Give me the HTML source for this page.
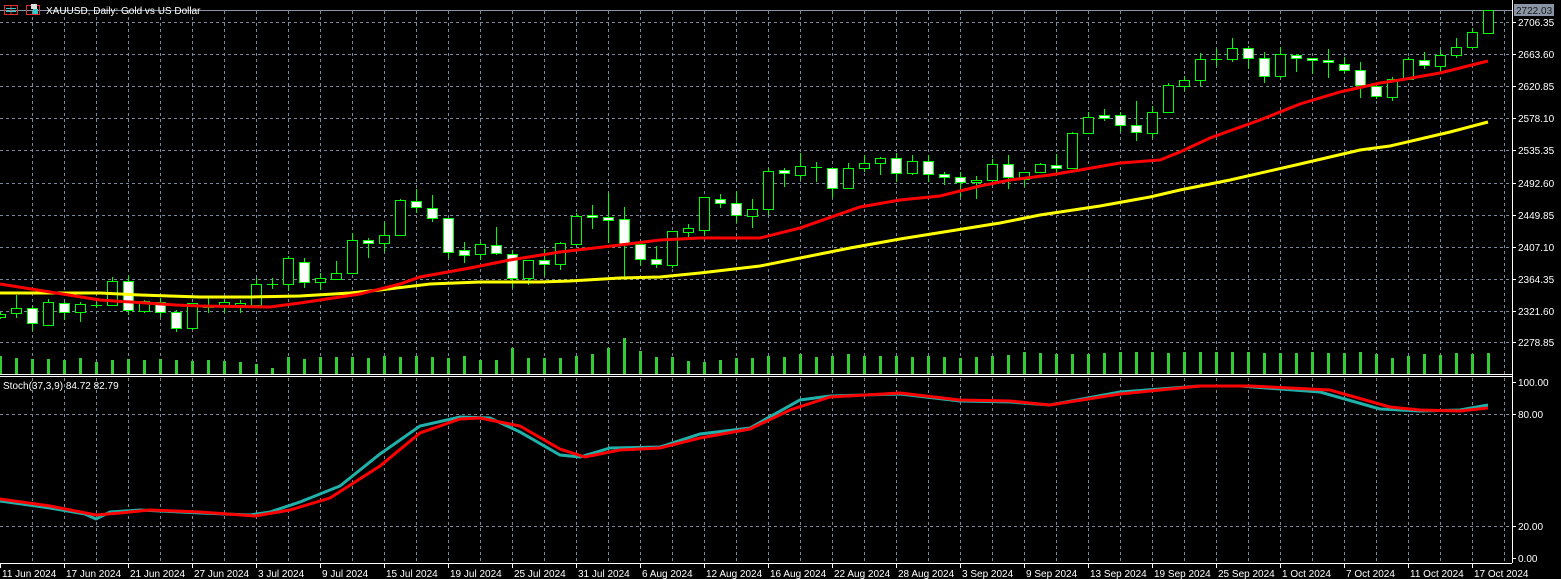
<!DOCTYPE html>
<html><head><meta charset="utf-8"><style>
html,body{margin:0;padding:0;background:#000;width:1561px;height:579px;overflow:hidden}
svg{display:block}
text{font-family:"Liberation Sans",sans-serif;font-size:10px;fill:#fff}
</style></head><body>
<svg id="s" width="1561" height="579" xmlns="http://www.w3.org/2000/svg">
<rect width="1561" height="579" fill="#000"/>
<g id="grid" stroke="#7a8a9c" stroke-width="1" stroke-dasharray="3,3"></g>
<line x1="0" y1="10.5" x2="1512" y2="10.5" stroke="#8a96a6"/>
<g id="vol" fill="#32cd32"></g>
<g id="cand"></g>
<polyline id="yel" fill="none" stroke="#ffff00" stroke-width="3"/>
<polyline id="red" fill="none" stroke="#ff0000" stroke-width="3"/>
<polyline id="st1" fill="none" stroke="#20b2aa" stroke-width="3"/>
<polyline id="st2" fill="none" stroke="#ff0000" stroke-width="3"/>
<line x1="0" y1="374.5" x2="1512" y2="374.5" stroke="#fff"/>
<line x1="0" y1="376.5" x2="1512" y2="376.5" stroke="#fff"/>
<line x1="0" y1="563.5" x2="1512" y2="563.5" stroke="#fff"/>
<line x1="1512.5" y1="0" x2="1512.5" y2="563" stroke="#fff"/>
<g id="axis"></g>
<rect x="1514" y="4" width="40" height="12" fill="#8a96a6"/>
<text x="1516" y="14" fill="#000" style="fill:#1a1a1a">2722.03</text>
<rect x="4.5" y="5.5" width="13" height="9" fill="none" stroke="#e03030"/>
<line x1="11" y1="5" x2="11" y2="15" stroke="#e03030"/>
<line x1="6" y1="8.5" x2="16" y2="8.5" stroke="#3cc"/><line x1="6" y1="11.5" x2="16" y2="11.5" stroke="#3cc"/>
<rect x="26.5" y="5.5" width="13" height="9" fill="none" stroke="#e03030"/>
<rect x="31" y="4" width="6" height="5" fill="#ddd"/><rect x="33" y="9" width="5" height="5" fill="#3cc"/>
<text x="46" y="14">XAUUSD, Daily:  Gold vs US Dollar</text>
<text x="3" y="389">Stoch(37,3,9) 84.72 82.79</text>
</svg>
<script>
var NS="http://www.w3.org/2000/svg";
function el(p,t,a,txt){var e=document.createElementNS(NS,t);for(var k in a)e.setAttribute(k,a[k]);if(txt)e.textContent=txt;document.getElementById(p).appendChild(e);return e;}
// grid
for(var x=32;x<1512;x+=32){el("grid","line",{x1:x+.5,y1:11,x2:x+.5,y2:374});el("grid","line",{x1:x+.5,y1:378,x2:x+.5,y2:563});}
var hy=[22,54,86,118,150,183,215,247,279,311,342,414,526];
hy.forEach(function(y){el("grid","line",{x1:0,y1:y+.5,x2:1512,y2:y+.5});});
// axis labels
var pl=[["2706.35",22],["2663.60",54],["2620.85",86],["2578.10",118],["2535.35",150],["2492.60",183],["2449.85",215],["2407.10",247],["2364.35",279],["2321.60",311],["2278.85",342],["100.00",382],["80.00",414],["20.00",526],["0.00",558]];
pl.forEach(function(p){el("axis","line",{x1:1512,y1:p[1]+.5,x2:1516,y2:p[1]+.5,stroke:"#fff"});el("axis","text",{x:1518,y:p[1]+4},p[0]);});
var d=["11 Jun 2024","17 Jun 2024","21 Jun 2024","27 Jun 2024","3 Jul 2024","9 Jul 2024","15 Jul 2024","19 Jul 2024","25 Jul 2024","31 Jul 2024","6 Aug 2024","12 Aug 2024","16 Aug 2024","22 Aug 2024","28 Aug 2024","3 Sep 2024","9 Sep 2024","13 Sep 2024","19 Sep 2024","25 Sep 2024","1 Oct 2024","7 Oct 2024","11 Oct 2024","17 Oct 2024"];
d.forEach(function(t,i){var x=i*64;el("axis","line",{x1:x+.5,y1:563,x2:x+.5,y2:568,stroke:"#fff"});el("axis","text",{x:x+2,y:577},t);});
// candles: [bodyTop,bodyBot,high,low,white]
var C=[[314,317,312,319,0],[308,313,295,318,0],[308,323,306,331,1],[302,325,299,326,0],[303,312,302,320,1],[304,312,302,322,0],[305,305,302,308,0],[281,305,277,305,0],[281,310,275,315,1],[301,311,300,313,0],[302,312,298,317,1],[312,328,310,332,1],[303,328,303,330,0],[305,307,297,313,0],[302,305,300,313,0],[303,305,300,313,0],[284,305,278,305,0],[284,284,278,289,0],[258,284,256,291,0],[262,282,258,288,1],[278,282,273,290,0],[273,279,261,279,0],[240,273,233,273,0],[240,243,238,258,1],[235,243,222,252,0],[200,235,199,236,0],
[201,207,189,213,1],[208,218,195,222,1],[218,252,218,258,1],[250,255,242,263,1],[244,254,242,260,0],[245,253,227,255,1],[254,278,250,288,1],[260,278,260,285,0],[260,264,249,276,1],[243,264,242,270,0],[216,244,213,244,0],[215,217,205,229,1],[217,220,193,243,1],[219,244,207,277,1],[244,259,244,266,1],[259,264,246,268,1],[231,265,231,268,0],[228,232,224,237,0],[197,230,197,235,0],[199,203,194,208,1],[203,215,191,223,1],[209,216,199,228,0],[171,209,168,215,0],[170,173,168,187,1],
[166,175,153,180,0],[167,167,162,182,0],[168,188,168,198,1],[168,188,163,188,0],[163,168,155,172,0],[158,163,157,175,0],[158,173,153,182,1],[161,173,155,175,0],[161,174,155,182,1],[174,177,172,185,1],[177,182,172,197,1],[180,182,176,199,0],[164,180,159,180,0],[164,177,155,189,1],[172,179,172,187,0],[164,172,163,172,0],[165,168,154,173,1],[133,168,132,168,0],[117,133,112,134,0],[115,118,109,121,1],[115,125,112,132,1],[125,132,101,141,1],[112,133,106,138,0],[85,112,83,113,0],
[80,86,76,91,0],[59,80,53,86,0],[59,59,49,66,0],[48,59,38,62,0],[48,58,46,69,1],[58,76,52,83,1],[54,76,47,78,0],[55,58,54,72,1],[58,60,58,74,1],[60,62,49,78,1],[64,70,57,73,1],[70,85,62,98,1],[86,96,86,99,1],[79,97,77,101,0],[59,79,57,79,0],[60,65,52,69,1],[55,66,50,72,0],[47,55,38,58,0],[32,47,28,47,0],[10,33,10,33,0]];
var vh=[18,16,15,15,14,16,12,14,15,14,15,14,13,14,13,12,10,6,17,15,17,17,17,16,18,17,18,17,16,18,14,14,26,16,16,16,18,20,26,36,23,17,17,13,12,14,16,16,18,17,20,17,18,20,18,18,18,17,18,17,16,17,18,19,22,21,20,20,20,21,22,22,22,21,22,22,22,22,22,21,21,21,22,21,21,22,20,16,18,20,19,21,20,21];
C.forEach(function(c,i){var x=i*16;
 el("vol","rect",{x:x-1,y:374-vh[i],width:3,height:vh[i]});
 el("cand","line",{x1:x+.5,y1:c[2],x2:x+.5,y2:c[0],stroke:"#00ff00"});
 el("cand","line",{x1:x+.5,y1:c[1],x2:x+.5,y2:c[3],stroke:"#00ff00"});
 if(c[1]-c[0]<1){el("cand","line",{x1:x-5,y1:c[0]+.5,x2:x+6,y2:c[0]+.5,stroke:"#00ff00"});}
 else el("cand","rect",{x:x-4.5,y:c[0]+.5,width:10,height:c[1]-c[0],fill:c[4]?"#fff":"#000",stroke:"#00ff00"});
});
function pts(id,a){document.getElementById(id).setAttribute("points",a.map(function(p){return p.join(",")}).join(" "));}
pts("red",[[0,284],[50,292],[100,300],[176,305],[200,306],[270,307],[300,303],[360,294],[400,284],[420,277],[470,268],[510,260],[560,252],[620,245],[660,240],[700,238],[760,238],[800,228],[860,207],[900,200],[940,196],[980,186],[1010,180],[1050,175],[1080,170],[1120,163],[1160,160],[1180,152],[1210,138],[1260,120],[1300,104],[1340,92],[1380,83],[1400,80],[1440,73],[1488,61]]);
pts("yel",[[0,293],[100,293],[140,295],[200,297],[250,297],[300,296],[350,293],[380,290],[430,284],[480,282],[540,282],[570,281],[620,278],[660,277],[700,273],[760,266],[800,258],[850,248],[900,239],[950,231],[1000,223],[1040,215],[1100,206],[1150,197],[1180,190],[1230,180],[1300,164],[1360,150],[1390,146],[1420,139],[1450,132],[1488,122]]);
pts("st1",[[0,501],[50,508],[85,514],[96,519],[110,512],[140,510],[160,511],[200,513],[250,515],[270,512],[300,502],[340,486],[380,454],[420,426],[460,417],[490,418],[520,432],[560,455],[580,457],[610,448],[660,447],[700,434],[750,428],[800,400],[830,396],[900,394],[960,401],[1010,402],[1050,405],[1120,392],[1200,386],[1240,386],[1320,392],[1380,409],[1420,411],[1460,410],[1488,405]]);
pts("st2",[[0,499],[50,506],[96,515],[120,513],[150,510],[200,512],[255,516],[290,510],[330,498],[380,466],[420,433],[460,419],[480,418],[520,426],[560,449],[585,457],[620,450],[660,448],[700,438],[750,429],[790,410],[830,397],[900,393],[960,400],[1010,401],[1050,405],[1120,394],[1200,386],[1250,386],[1330,390],[1390,407],[1420,410],[1460,411],[1488,408]]);
</script>
</body></html>
